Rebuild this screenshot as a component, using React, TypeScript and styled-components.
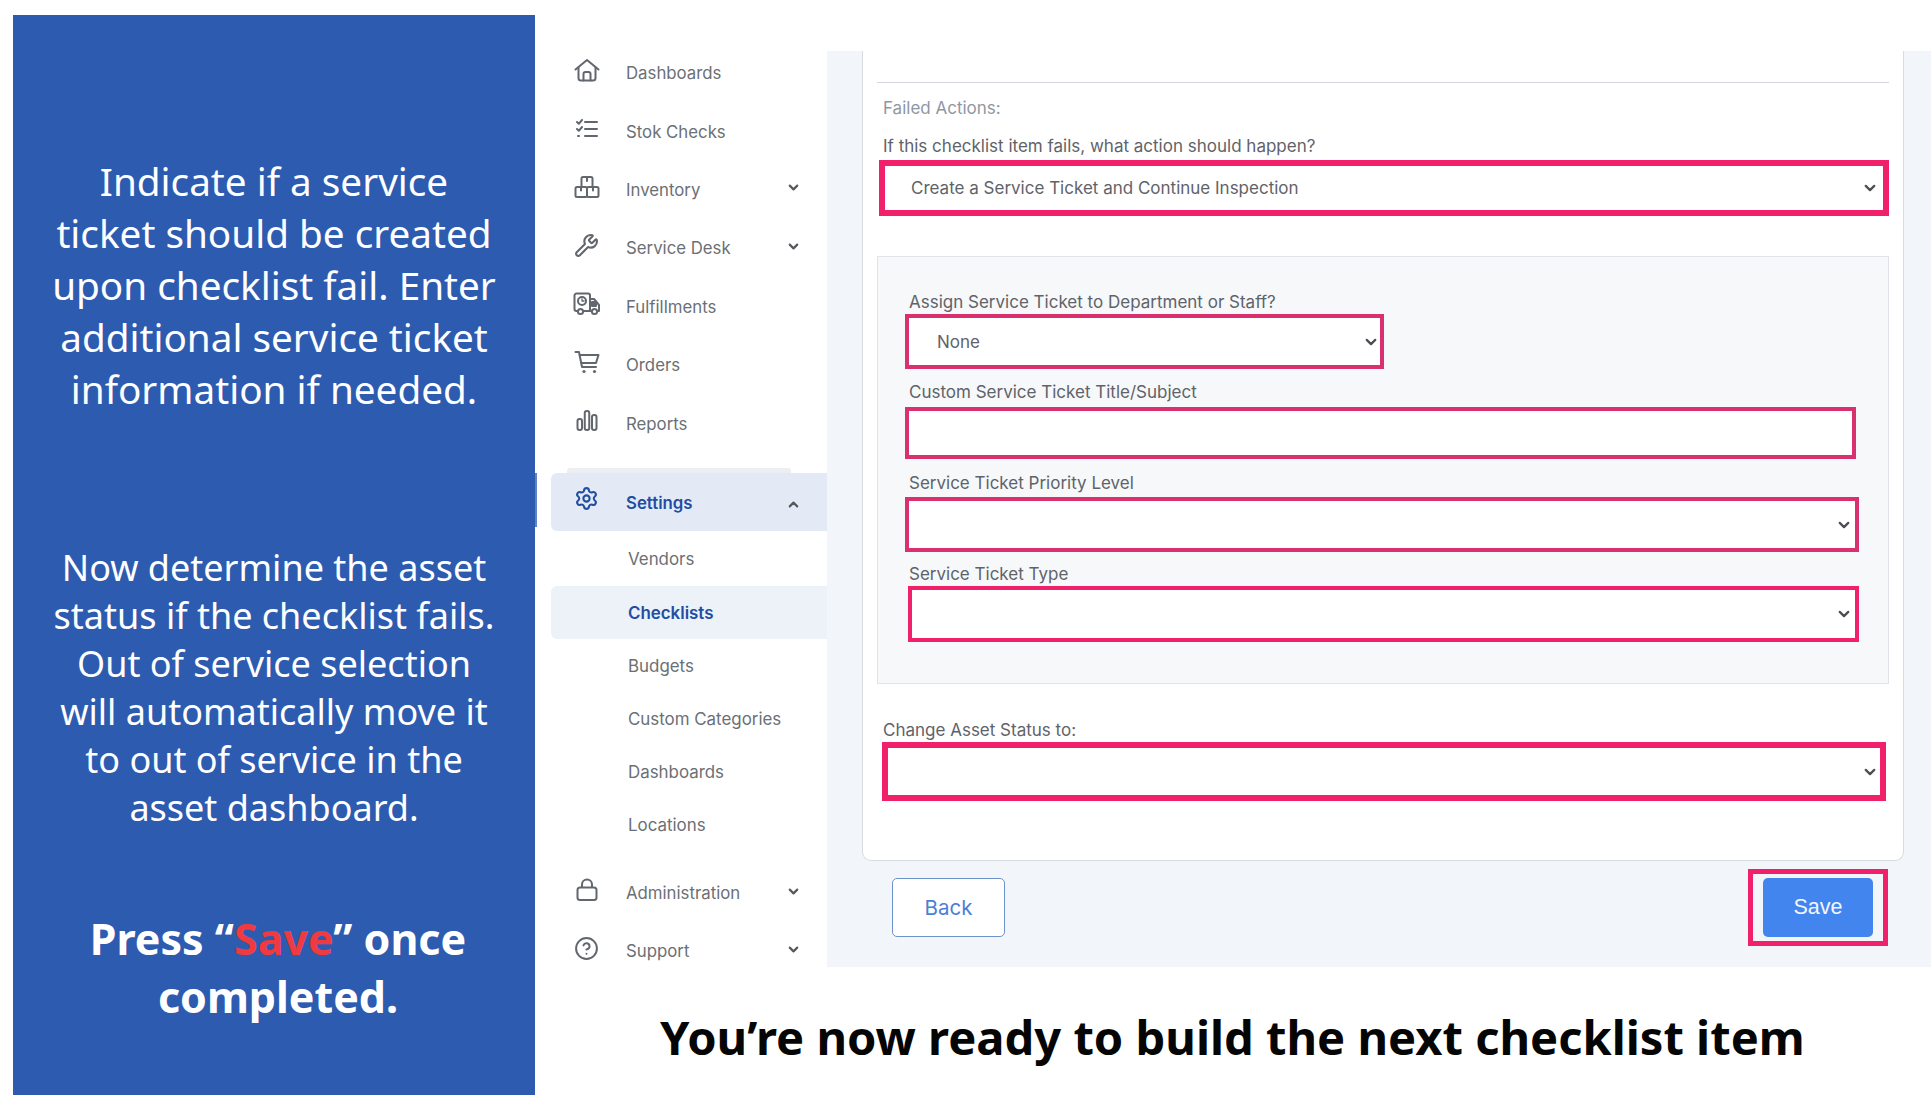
import React from "react";
import styled, { createGlobalStyle } from "styled-components";
import { ChevronDown, ChevronUp, CircleHelp, Settings, Wrench } from "lucide-react";

const Global = createGlobalStyle`
  html, body { margin: 0; padding: 0; background: #fff; }
  body { width: 1931px; height: 1096px; overflow: hidden; font-family: "Inter", "Liberation Sans", sans-serif; }
`;

const Page = styled.div`
  display: flex;
  width: 1931px;
  height: 1096px;
`;

const Side = styled.aside`
  box-sizing: border-box;
  width: 522px;
  height: 1080px;
  margin: 15px 0 0 13px;
  flex: none;
  background: #2d5bb0;
  color: #fff;
  font-family: "Noto Sans", sans-serif;
  text-align: center;
  position: relative;
  padding-top: 140px;
  &::after {
    content: "";
    position: absolute;
    left: 100%;
    top: 458px;
    width: 2px;
    height: 54px;
    background: #5f82c4;
  }
`;

const Para = styled.p<{ $size: number; $line: number; $mt: number; $weight?: number; $inset?: number }>`
  margin: ${(p) => p.$mt}px 0 0;
  padding-left: ${(p) => p.$inset ?? 0}px;
  font-size: ${(p) => p.$size}px;
  line-height: ${(p) => p.$line}px;
  font-weight: ${(p) => p.$weight ?? 400};
`;

const Red = styled.span`
  color: #ef3b3f;
`;

const Right = styled.div`
  flex: 1;
  min-width: 0;
  padding-top: 44px;
  display: flex;
  flex-direction: column;
`;

const Workspace = styled.div`
  display: flex;
  height: 923px;
`;

const Nav = styled.nav`
  width: 292px;
  flex: none;
  padding-left: 16px;
  box-sizing: border-box;
  display: flex;
  flex-direction: column;
`;

const NavItem = styled.div<{ $active?: boolean }>`
  flex: none;
  display: flex;
  align-items: center;
  height: ${(p) => (p.$active ? 58 : 58.4)}px;
  color: ${(p) => (p.$active ? "#1f4ea3" : "#6b7075")};
  font-weight: ${(p) => (p.$active ? 600 : 400)};
  font-size: 16.8px;
  border-radius: 6px 0 0 6px;
  background: ${(p) => (p.$active ? "#e4eaf5" : "transparent")};
`;

const IconSlot = styled.span`
  box-sizing: border-box;
  width: 75px;
  flex: none;
  display: flex;
  justify-content: center;
  padding-right: 4px;
  margin-top: -6px;
  color: #62676d;
  svg { display: block; }
`;

const NavLabel = styled.span<{ $drop?: number }>`
  flex: 1;
  padding-top: ${(p) => p.$drop ?? 0}px;
`;

const Caret = styled.span<{ $drop?: number }>`
  width: 32px;
  margin-right: 18px;
  display: flex;
  justify-content: center;
  margin-top: ${(p) => p.$drop ?? -4}px;
  color: #55595e;
`;

const SubList = styled.div`
  flex: none;
  display: flex;
  flex-direction: column;
  margin: 2px 0 12px;
`;

const SubItem = styled.div<{ $active?: boolean }>`
  height: 53.2px;
  display: flex;
  align-items: center;
  padding-left: 77px;
  font-size: 16.9px;
  color: ${(p) => (p.$active ? "#1f4ea3" : "#6b7075")};
  font-weight: ${(p) => (p.$active ? 600 : 400)};
  border-radius: 6px 0 0 6px;
  background: ${(p) => (p.$active ? "#edf1f8" : "transparent")};
`;

const SettingsRule = styled.div`
  flex: none;
  margin: 15px 0 0 16px;
  width: 224px;
  height: 5px;
  background: #eceef2;
  border-radius: 3px 3px 0 0;
`;

const Main = styled.main`
  flex: 1;
  min-width: 0;
  margin-top: 7px;
  background: #f2f5f9;
  padding: 0 0 0 35px;
  display: flex;
  flex-direction: column;
`;

const Card = styled.section`
  box-sizing: border-box;
  width: 1042px;
  height: 810px;
  background: #fff;
  border: 1px solid #d8dce1;
  border-top: none;
  border-radius: 0 0 9px 9px;
  padding: 31px 14px 0;
`;

const Rule = styled.hr`
  border: none;
  height: 1px;
  background: #d3d6db;
  margin: 0;
`;

const Legend = styled.div`
  margin: 15px 0 0 6px;
  font-size: 17px;
  line-height: 20px;
  color: #8f97a3;
`;

const Label = styled.label<{ $mt: number; $ml: number }>`
  display: block;
  margin: ${(p) => p.$mt}px 0 0 ${(p) => p.$ml}px;
  font-size: 17px;
  line-height: 20px;
  color: #5f6369;
`;

type BoxProps = { $w: number; $h: number; $b: number; $ml: number; $mt: number; $color: string };

const PickerShell = styled.div<BoxProps>`
  position: relative;
  width: ${(p) => p.$w}px;
  height: ${(p) => p.$h}px;
  margin: ${(p) => p.$mt}px 0 0 ${(p) => p.$ml}px;
  --edge: ${(p) => p.$b}px;
  --line: ${(p) => p.$color};
`;

const Picker = styled.select`
  appearance: none;
  display: block;
  box-sizing: border-box;
  width: 100%;
  height: 100%;
  border: var(--edge) solid var(--line);
  border-radius: 0;
  outline: none;
  background: #fff;
  color: #5f6369;
  font: 400 17px "Inter", sans-serif;
  padding: 0 0 0 calc(32px - var(--edge));
`;

const PickerCaret = styled.span<{ $right: number }>`
  position: absolute;
  top: 50%;
  right: ${(p) => p.$right}px;
  transform: translate(50%, -50%);
  color: #4c5056;
  pointer-events: none;
  display: flex;
`;

const TextBox = styled.input<BoxProps>`
  display: block;
  box-sizing: border-box;
  width: ${(p) => p.$w}px;
  height: ${(p) => p.$h}px;
  margin: ${(p) => p.$mt}px 0 0 ${(p) => p.$ml}px;
  border: ${(p) => p.$b}px solid ${(p) => p.$color};
  border-radius: 0;
  outline: none;
  background: #fff;
`;

const Group = styled.div`
  box-sizing: border-box;
  height: 428px;
  margin-top: 40px;
  background: #f6f8fa;
  border: 1px solid #e0e3e7;
  padding-top: 35px;
`;

const Actions = styled.div`
  display: flex;
  justify-content: space-between;
  align-items: center;
  width: 1026px;
  height: 77px;
  margin-top: 8px;
`;

const BackButton = styled.button`
  box-sizing: border-box;
  width: 113px;
  height: 59px;
  margin-left: 30px;
  background: #fff;
  border: 1px solid #6c92cc;
  border-radius: 5px;
  color: #4b7fd6;
  font: 400 20.5px "Inter", sans-serif;
`;

const SaveFrame = styled.div`
  box-sizing: border-box;
  width: 140px;
  height: 77px;
  border: 5px solid #f0206a;
  display: flex;
  align-items: center;
  justify-content: center;
`;

const SaveButton = styled.button`
  width: 110px;
  height: 59px;
  border: none;
  border-radius: 5px;
  background: #4285ee;
  color: #f2f6fe;
  font: 400 21.5px "Liberation Sans", sans-serif;
`;

const Caption = styled.h1`
  margin: 42px 0 0 125px;
  font: 700 47.1px/56px "Noto Sans", sans-serif;
  color: #050505;
  white-space: nowrap;
`;

const PINK = "#f0206a";
const ROSE = "#d9306f";

const HomeIcon = () => (
  <svg width="26" height="24" viewBox="0 0 26 24" fill="none" stroke="currentColor" strokeWidth="2" strokeLinecap="round" strokeLinejoin="round">
    <path d="M1.500 11.500 13 2l11.500 9.500" />
    <path d="M4.500 9.500V20a2.500 2.500 0 0 0 2.500 2.500h12a2.500 2.500 0 0 0 2.500-2.500V9.500" />
    <path d="M9.500 22.500V16a2 2 0 0 1 2-2h3a2 2 0 0 1 2 2v6.500" />
  </svg>
);

const ListIcon = () => (
  <svg width="24" height="20" viewBox="0 0 24 20" fill="none" stroke="currentColor" strokeWidth="2" strokeLinecap="round" strokeLinejoin="round">
    <path d="M10 3h12M10 10h12M10 17h12" />
    <path d="M2 3l1.800 1.800L7 1M2 10l1.800 1.800L7 8" />
    <path d="M3 17h1" />
  </svg>
);

const BoxesIcon = () => (
  <svg width="26" height="24" viewBox="0 0 26 24" fill="none" stroke="currentColor" strokeWidth="2" strokeLinecap="round" strokeLinejoin="round">
    <rect x="1.500" y="12" width="11.500" height="10" rx="1.500" />
    <rect x="13" y="12" width="11.500" height="10" rx="1.500" />
    <path d="M7.500 12V3.500A1.500 1.500 0 0 1 9 2h8a1.500 1.500 0 0 1 1.500 1.500V12" />
    <path d="M13 2v4M7 12v3.500M19 12v3.500" />
  </svg>
);

const TruckIcon = () => (
  <svg width="28" height="24" viewBox="0 0 28 24" fill="none" stroke="currentColor" strokeWidth="2" strokeLinecap="round" strokeLinejoin="round">
    <path d="M4.500 19H3.500A2 2 0 0 1 1.500 17V3.500A2 2 0 0 1 3.500 1.500H15a2 2 0 0 1 2 2V19H10.500" />
    <path d="M17 7h4l5 6v6h-1.500M17 19h1.500" />
    <circle cx="7.500" cy="19.500" r="2.600" />
    <circle cx="21.500" cy="19.500" r="2.600" />
    <circle cx="9" cy="9" r="4" />
    <path d="M9 7v2h2" strokeWidth="1.300" />
    <path d="M19 10h4v4h-4z" fill="currentColor" />
  </svg>
);

const CartIcon = () => (
  <svg width="26" height="24" viewBox="0 0 26 24" fill="none" stroke="currentColor" strokeWidth="2" strokeLinecap="round" strokeLinejoin="round">
    <path d="M1.500 2H5l3 15h14" />
    <path d="M5.700 5h18.800L22 13H7.300" />
    <circle cx="10" cy="21.500" r="1.600" fill="currentColor" stroke="none" />
    <circle cx="20.500" cy="21.500" r="1.600" fill="currentColor" stroke="none" />
  </svg>
);

const BarsIcon = () => (
  <svg width="22" height="24" viewBox="0 0 22 24" fill="none" stroke="currentColor" strokeWidth="2">
    <rect x="1.500" y="10" width="4.500" height="11" rx="2" />
    <rect x="8.750" y="2" width="4.500" height="19" rx="2" />
    <rect x="16" y="6" width="4.500" height="15" rx="2" />
  </svg>
);

const LockIcon = () => (
  <svg width="22" height="24" viewBox="0 0 22 24" fill="none" stroke="currentColor" strokeWidth="2" strokeLinejoin="round">
    <rect x="1.500" y="9.500" width="19" height="12.500" rx="2.500" />
    <path d="M6 9.500V6.500a5 5 0 0 1 10 0v3" />
  </svg>
);

const down = <ChevronDown size={15} strokeWidth={3.4} />;
const items: { label: string; icon: React.ReactNode; caret?: boolean }[] = [
  { label: "Dashboards", icon: <HomeIcon /> },
  { label: "Stok Checks", icon: <ListIcon /> },
  { label: "Inventory", icon: <BoxesIcon />, caret: true },
  { label: "Service Desk", icon: <Wrench size={25} strokeWidth={2} />, caret: true },
  { label: "Fulfillments", icon: <TruckIcon /> },
  { label: "Orders", icon: <CartIcon /> },
  { label: "Reports", icon: <BarsIcon /> },
];

const subs = ["Vendors", "Checklists", "Budgets", "Custom Categories", "Dashboards", "Locations"];

const Select = ({ right, value, ...box }: BoxProps & { right: number; value?: string }) => (
  <PickerShell {...box}>
    <Picker defaultValue={value ?? ""}>
      <option value={value ?? ""}>{value ?? ""}</option>
    </Picker>
    <PickerCaret $right={right}>
      <ChevronDown size={17} strokeWidth={3.2} />
    </PickerCaret>
  </PickerShell>
);

export default function App() {
  return (
    <Page>
      <Global />
      <Side>
        <Para $size={38.7} $line={52} $mt={0}>
          Indicate if a service<br />ticket should be created<br />upon checklist fail. Enter<br />additional service ticket<br />information if needed.
        </Para>
        <Para $size={36} $line={48} $mt={129}>
          Now determine the asset<br />status if the checklist fails.<br />Out of service selection<br />will automatically move it<br />to out of service in the<br />asset dashboard.
        </Para>
        <Para $size={43} $line={58} $mt={78} $weight={700} $inset={8}>
          Press “<Red>Save</Red>” once<br />completed.
        </Para>
      </Side>
      <Right>
        <Workspace>
          <Nav>
            {items.map((it) => (
              <NavItem key={it.label}>
                <IconSlot>{it.icon}</IconSlot>
                <NavLabel>{it.label}</NavLabel>
                {it.caret && <Caret>{down}</Caret>}
              </NavItem>
            ))}
            <SettingsRule />
            <NavItem $active>
              <IconSlot><Settings size={25} strokeWidth={2} color="#1f4ea3" /></IconSlot>
              <NavLabel $drop={2}>Settings</NavLabel>
              <Caret $drop={5}><ChevronUp size={15} strokeWidth={3.4} /></Caret>
            </NavItem>
            <SubList>
              {subs.map((s) => (
                <SubItem key={s} $active={s === "Checklists"}>{s}</SubItem>
              ))}
            </SubList>
            <NavItem>
              <IconSlot><LockIcon /></IconSlot>
              <NavLabel>Administration</NavLabel>
              <Caret>{down}</Caret>
            </NavItem>
            <NavItem>
              <IconSlot><CircleHelp size={25} strokeWidth={1.9} /></IconSlot>
              <NavLabel>Support</NavLabel>
              <Caret>{down}</Caret>
            </NavItem>
          </Nav>
          <Main>
            <Card>
              <Rule />
              <Legend>Failed Actions:</Legend>
              <Label $mt={18} $ml={6}>If this checklist item fails, what action should happen?</Label>
              <Select $w={1010} $h={56} $b={6} $ml={2} $mt={4} $color={PINK} right={19} value="Create a Service Ticket and Continue Inspection" />
              <Group>
                <Label $mt={0} $ml={31}>Assign Service Ticket to Department or Staff?</Label>
                <Select $w={479} $h={55} $b={4} $ml={27} $mt={2} $color={ROSE} right={13} value="None" />
                <Label $mt={13} $ml={31}>Custom Service Ticket Title/Subject</Label>
                <TextBox $w={951} $h={52} $b={4} $ml={27} $mt={5} $color={ROSE} />
                <Label $mt={14} $ml={31}>Service Ticket Priority Level</Label>
                <Select $w={954} $h={55} $b={4} $ml={27} $mt={4} $color={ROSE} right={15} />
                <Label $mt={12} $ml={31}>Service Ticket Type</Label>
                <Select $w={951} $h={56} $b={4} $ml={30} $mt={2} $color={PINK} right={15} />
              </Group>
              <Label $mt={36} $ml={6}>Change Asset Status to:</Label>
              <Select $w={1004} $h={59} $b={6} $ml={5} $mt={2} $color={PINK} right={16} />
            </Card>
            <Actions>
              <BackButton>Back</BackButton>
              <SaveFrame><SaveButton>Save</SaveButton></SaveFrame>
            </Actions>
          </Main>
        </Workspace>
        <Caption>You’re now ready to build the next checklist item</Caption>
      </Right>
    </Page>
  );
}
